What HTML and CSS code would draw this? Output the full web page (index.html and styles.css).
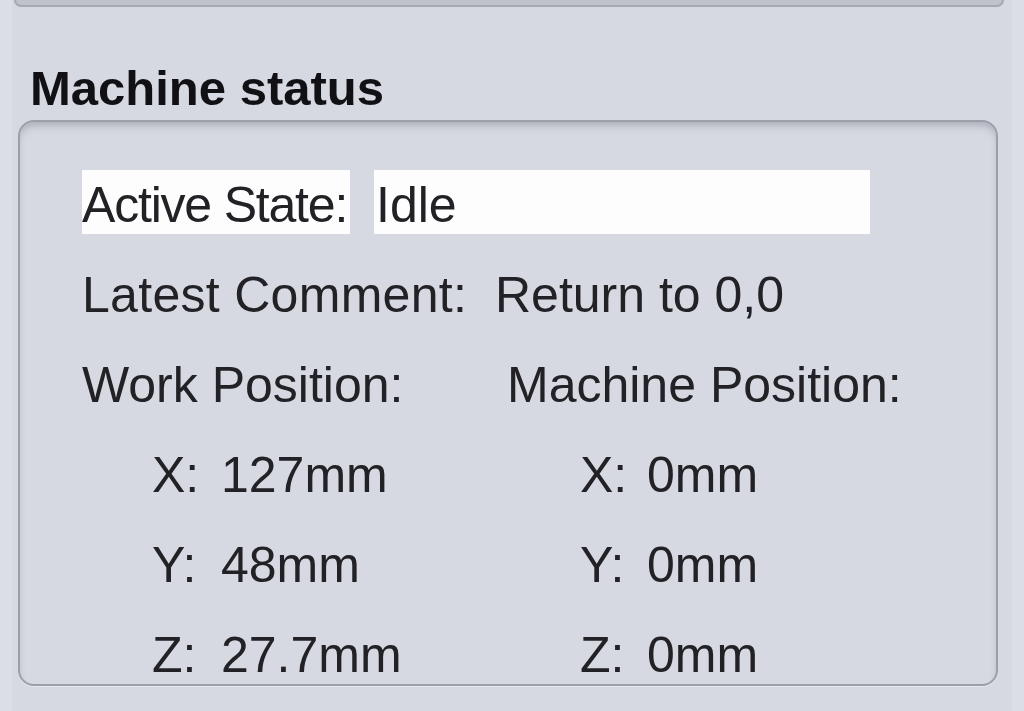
FILE: index.html
```html
<!DOCTYPE html>
<html>
<head>
<meta charset="utf-8">
<link rel="stylesheet" href="styles.css">
</head>
<body>
<div class="frame">
  <div class="prev-box"></div>
  <h2 class="title">Machine status</h2>
  <div class="status-box">
    <div class="state-row">
      <span class="state-label">Active State:</span>
      <span class="state-value">Idle</span>
    </div>
    <div class="row">
      <span class="comment-label">Latest Comment:</span>
      <span class="comment-value">Return to 0,0</span>
    </div>
    <div class="positions">
      <div class="pos-col">
        <div class="row">Work Position:</div>
        <div class="row axis"><span class="axis-label">X:</span><span>127mm</span></div>
        <div class="row axis"><span class="axis-label">Y:</span><span>48mm</span></div>
        <div class="row axis"><span class="axis-label">Z:</span><span>27.7mm</span></div>
      </div>
      <div class="pos-col">
        <div class="row">Machine Position:</div>
        <div class="row axis m"><span class="axis-label">X:</span><span>0mm</span></div>
        <div class="row axis m"><span class="axis-label">Y:</span><span>0mm</span></div>
        <div class="row axis m"><span class="axis-label">Z:</span><span>0mm</span></div>
      </div>
    </div>
  </div>
</div>
</body>
</html>
```
FILE: styles.css
```css
html, body {
  margin: 0;
  padding: 0;
  background: #d6d9e1;
}
body {
  width: 1024px;
  height: 711px;
  overflow: hidden;
  font-family: "Liberation Sans", Arial, sans-serif;
  color: #222226;
}
.frame {
  height: 711px;
  box-sizing: border-box;
  border-left: 12px solid #dbdee5;
  border-right: 12px solid #dbdee5;
}
.prev-box {
  margin: 0 8px 0 2px;
  height: 5px;
  background: #c0c3cb;
  border: 2px solid #a6a9b1;
  border-top: none;
  border-radius: 0 0 10px 10px;
}
.title {
  margin: 54px 0 0 18px;
  font-size: 49px;
  font-weight: bold;
  line-height: 54px;
  color: #111115;
}
.status-box {
  margin: 5px 14px 0 6px;
  height: 566px;
  box-sizing: border-box;
  border: 2px solid #9c9fa7;
  border-radius: 16px;
  box-shadow: inset 0 6px 8px -3px rgba(60, 64, 75, 0.3), 0 1px 0 #e6e8ee;
  padding: 48px 0 0 62px;
  font-size: 50px;
}
.state-row {
  display: flex;
  gap: 24px;
  height: 64px;
  margin-bottom: 16px;
}
.state-label,
.state-value {
  background: #fdfdfd;
  line-height: 64px;
  padding-top: 3px;
  height: 61px;
  white-space: nowrap;
}
.state-label {
  width: 268px;
  letter-spacing: -1.2px;
}
.state-value {
  width: 494px;
  padding-left: 2px;
}
.row {
  display: flex;
  line-height: 90px;
  height: 90px;
  white-space: nowrap;
}
.comment-label {
  width: 413px;
  letter-spacing: 0.3px;
}
.positions {
  display: grid;
  grid-template-columns: 425px 1fr;
}
.axis {
  padding-left: 70px;
}
.axis.m {
  padding-left: 73px;
}
.axis-label {
  width: 69px;
}
.axis.m .axis-label {
  width: 67px;
}
```
